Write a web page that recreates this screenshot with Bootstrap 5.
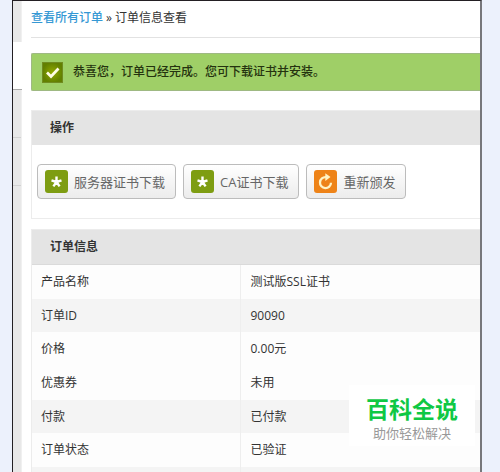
<!DOCTYPE html>
<html lang="zh-CN">
<head>
<meta charset="utf-8">
<meta name="viewport" content="width=device-width, initial-scale=1">
<title>订单信息查看</title>
<link href="https://cdn.jsdelivr.net/npm/bootstrap@5.3.0/dist/css/bootstrap.min.css" rel="stylesheet">
<style>
  body { background: #ecf1fc; color: #333; font: 12px/18px "Open Sans", "Noto Sans CJK SC", sans-serif; }
  .page-shell { padding: 0 18px 0 12px; height: 100vh; }
  .viewer { background: #fff; border: 1px solid #231f23; border-right: 2px solid #77777b; border-bottom: 0; }
  .side-rail { width: 9px; background: #e8e8e8; border-right: 1px solid #f0f0f0; }
  .side-rail div { height: 48px; border-bottom: 1px solid #d2d2d2; }
  .side-rail .rail-top { height: 41px; border: 0; }
  .side-rail .rail-active { background: #fff; margin-right: -1px; border-color: #aaa; }
  .main-area { padding-left: 9px; }
  .crumbs { height: 37px; padding-bottom: 2px; border-bottom: 1px solid #e2e2e2; }
  .crumbs a { color: #3598d4; text-decoration: none; font-weight: 500; }
  .crumbs .sep { margin: 0 3px; }
  .done-note { height: 38px; margin: 15px 0 19px; padding: 0 10px; gap: 10px; background: #9fcf67; border: 1px solid #9fb983; border-right: 0; border-radius: 2px 0 0 2px; color: #25330f; font-weight: 500; }
  .panel { border: 1px solid #ececec; margin-bottom: 10px; }
  .panel-title { height: 34px; padding: 0 18px; margin: 0; background: #e4e4e4; font-size: 12px; font-weight: 700; }
  .panel-title.tall { height: 35px; border-bottom: 1px solid #dadada; }
  .tools { padding: 19px 5px; gap: 7px; }
  .tool-btn { --bs-btn-font-size: 13px; --bs-btn-line-height: 20px; --bs-btn-padding-x: 7px; --bs-btn-padding-y: 0; --bs-btn-color: #666; height: 35px; gap: 6px; padding-right: 10px; border: 1px solid #bcbcbc; border-radius: 4px; background: linear-gradient(#fff, #ececec); white-space: nowrap; }
  .order-table { --bs-table-bg: transparent; color: #333; table-layout: fixed; }
  .order-table th, .order-table td { height: 34px; padding: 0 9px; border: 0; vertical-align: middle; font-weight: 400; background: #fdfdfd; }
  .order-table th { width: 208px; border-right: 1px solid #eee; }
  .order-table td { padding-left: 10px; }
  .order-table .shade > * { height: 33px; background: #f4f4f4; }
  .stamp { right: 25px; bottom: 26px; padding: 10px 17px 3px; background: rgba(255,255,255,.95); color: #999; font-size: 13px; line-height: 20px; text-align: center; }
  .stamp strong { display: block; color: #0fc844; font-size: 23px; line-height: 28px; }
</style>
<script src="https://cdn.jsdelivr.net/npm/bootstrap@5.3.0/dist/js/bootstrap.bundle.min.js"></script>
</head>
<body class="overflow-hidden">
<div class="page-shell position-relative">
  <div class="viewer d-flex h-100 overflow-hidden">
    <div class="side-rail flex-shrink-0">
      <div class="rail-top"></div><div class="rail-active"></div><div></div><div></div>
    </div>
    <main class="main-area flex-grow-1">
      <nav class="crumbs d-flex align-items-center" aria-label="位置">
        <a href="#">查看所有订单</a><span class="sep">»</span><span>订单信息查看</span>
      </nav>
      <div class="done-note d-flex align-items-center" role="status">
        <svg width="21" height="21" viewBox="0 0 21 21" aria-hidden="true"><defs><radialGradient id="moss"><stop stop-color="#91a900"/><stop offset="1" stop-color="#628000"/></radialGradient></defs><rect x=".5" y=".5" width="20" height="20" fill="url(#moss)" stroke="#708b20"/><path d="M5 10.5l4 4 7.5-8" fill="none" stroke="#fffde5" stroke-width="2.7"/></svg>
        <span>恭喜您，订单已经完成。您可下载证书并安装。</span>
      </div>
      <section class="panel border-end-0">
        <h2 class="panel-title d-flex align-items-center">操作</h2>
        <div class="tools d-flex">
          <button type="button" class="btn tool-btn d-flex align-items-center">
            <svg width="23" height="23" viewBox="0 0 23 23" aria-hidden="true"><rect width="23" height="23" rx="3" fill="#7e9d12"/><path d="M11.5 12V6.5M11.5 12l-5-1.7M11.5 12l5-1.7M11.5 12l-3.1 4.4M11.5 12l3.1 4.4" stroke="#fff" stroke-width="2.4"/></svg>服务器证书下载</button>
          <button type="button" class="btn tool-btn d-flex align-items-center">
            <svg width="23" height="23" viewBox="0 0 23 23" aria-hidden="true"><rect width="23" height="23" rx="3" fill="#7e9d12"/><path d="M11.5 12V6.5M11.5 12l-5-1.7M11.5 12l5-1.7M11.5 12l-3.1 4.4M11.5 12l3.1 4.4" stroke="#fff" stroke-width="2.4"/></svg>CA证书下载</button>
          <button type="button" class="btn tool-btn d-flex align-items-center">
            <svg width="23" height="23" viewBox="0 0 23 23" aria-hidden="true"><rect width="23" height="23" rx="3" fill="#ee8318"/><path d="M12 7.2a5.5 5.5 0 1 0 5 5.6" fill="none" stroke="#fff3c4" stroke-width="2.3"/><path d="M11.3 3.2l5.2 3.9-5.2 3.8z" fill="#fff3c4"/></svg>重新颁发</button>
        </div>
      </section>
      <section class="panel border-end-0">
        <h2 class="panel-title tall d-flex align-items-center">订单信息</h2>
        <table class="table order-table mb-0">
          <tbody>
            <tr><th scope="row">产品名称</th><td>测试版SSL证书</td></tr>
            <tr class="shade"><th scope="row">订单ID</th><td>90090</td></tr>
            <tr><th scope="row">价格</th><td>0.00元</td></tr>
            <tr><th scope="row">优惠券</th><td>未用</td></tr>
            <tr class="shade"><th scope="row">付款</th><td>已付款</td></tr>
            <tr><th scope="row">订单状态</th><td>已验证</td></tr>
            <tr class="shade"><th></th><td></td></tr>
          </tbody>
        </table>
      </section>
    </main>
  </div>
  <div class="stamp position-absolute"><strong>百科全说</strong>助你轻松解决</div>
</div>
</body>
</html>
